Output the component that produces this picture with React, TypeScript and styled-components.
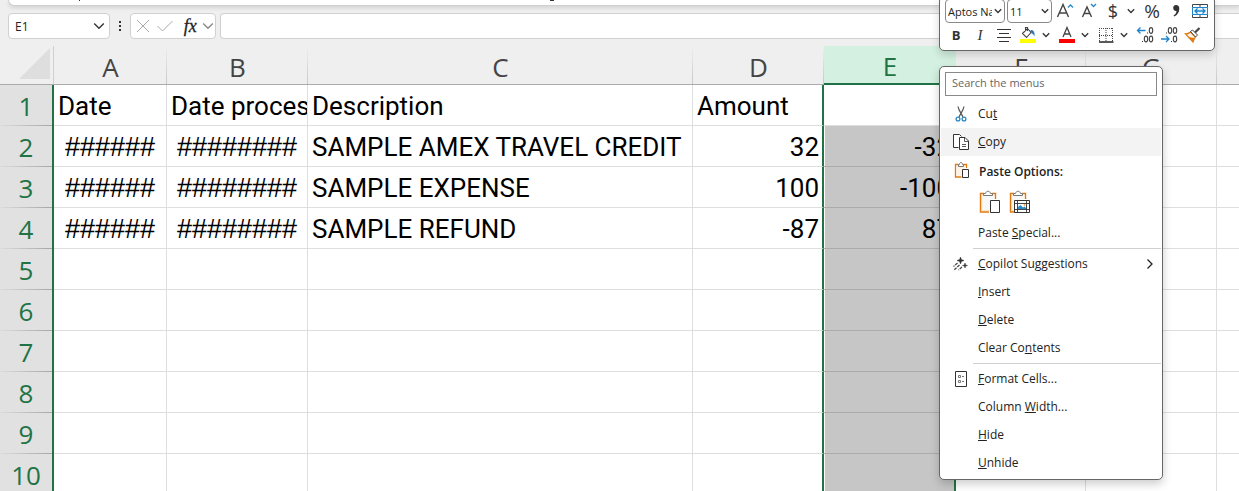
import React from "react";
import styled, { createGlobalStyle, css } from "styled-components";

const UI = `"Open Sans", "Noto Sans", sans-serif`;
const CELL = `Roboto, "Liberation Sans", sans-serif`;
const GREEN = "#217346";

const Global = createGlobalStyle`
  * { box-sizing: border-box; }
  html, body { margin: 0; background: #fff; }
  body { font-family: ${UI}; font-size: 12px; color: #222; overflow: hidden; }
  button, input, select { font: inherit; color: inherit; margin: 0; }
  button { background: none; border: 0; padding: 0; }
`;

const Page = styled.div`
  position: relative;
  display: flex;
  flex-direction: column;
  height: 100vh;
  overflow: hidden;
  background: #fff;
`;

const TopArea = styled.header`
  flex: none;
  background: #efefef;
  height: 46px;
`;

const RibbonEdge = styled.div`
  height: 6px;
  margin-left: 8px;
  background:
    linear-gradient(#333, #333) 70px 0 / 1px 1px no-repeat,
    linear-gradient(#333, #333) 541px 0 / 4px 1px no-repeat,
    #fff;
  border: 1px solid #d0d0d0;
  border-top: 0;
  border-right: 0;
  border-radius: 0 0 0 6px;
  box-shadow: 0 2px 4px rgba(0, 0, 0, 0.12);
`;

const FormulaBar = styled.div`
  display: flex;
  align-items: center;
  padding: 7px 0 0 8px;
`;

const Box = styled.div`
  display: flex;
  align-items: center;
  height: 26px;
  background: #fff;
  border: 1px solid #d0d0d0;
  border-radius: 4px;
`;

const NameBox = styled(Box)`
  width: 102px;
  padding: 0 4px 0 6px;
`;

const NameInput = styled.input`
  flex: 1;
  min-width: 0;
  border: 0;
  padding: 0;
  background: none;
  outline: none;
`;

const Dots = styled.div`
  width: 20px;
  display: flex;
  flex-direction: column;
  align-items: center;
  gap: 2px;
  &::before, &::after, & > span {
    content: "";
    width: 2px;
    height: 2px;
    background: #333;
  }
`;

const FxBox = styled(Box)`
  width: 86px;
  padding: 0 1px 0 4px;
  justify-content: space-between;
  margin-right: 4px;
`;

const Fx = styled.button`
  padding-left: 4px;
  font: italic 18px/20px "Liberation Serif", serif;
  color: #222;
  -webkit-text-stroke: 0.3px #222;
`;

const IconButton = styled.button`
  display: flex;
  align-items: center;
  justify-content: center;
`;

const FormulaInput = styled.input`
  flex: 1;
  height: 26px;
  border: 1px solid #d0d0d0;
  border-right: 0;
  border-radius: 4px 0 0 4px;
  background: #fff;
  outline: none;
`;

const Sheet = styled.table`
  flex: none;
  width: 100%;
  table-layout: fixed;
  border-collapse: separate;
  border-spacing: 0;
`;

const HeadCell = styled.th<{ $on?: boolean; $last?: boolean }>`
  height: 39px;
  padding: 3px 0 0;
  font: 400 26px/30px ${UI};
  color: ${(p) => (p.$on ? GREEN : "#444")};
  background: ${(p) =>
    p.$on
      ? "#d3f0e0"
      : p.$last
        ? "#efefef"
        : "linear-gradient(#efefef, #c8c8c8) right / 1px 100% no-repeat, #efefef"};
  border-bottom: ${(p) => (p.$on ? `2px solid ${GREEN}` : "1px solid #ababab")};
`;

const Corner = styled.td`
  padding: 0 3px 3px 0;
  background: #efefef;
  border-bottom: 1px solid #ababab;
  border-right: 1px solid #d0d0d0;
  svg { display: block; margin-left: auto; }
`;

const RowHead = styled.th`
  height: 41px;
  padding: 0;
  font: 400 26px/30px ${UI};
  color: ${GREEN};
  background: linear-gradient(90deg, #dcdcdc, #a6a6a6) bottom / 100% 1px no-repeat, #e1e1e1;
  border-right: 2px solid ${GREEN};
`;

type Kind = "text" | "num" | "hash";

const Cell = styled.td<{
  $kind?: Kind;
  $sel?: boolean;
  $shade?: boolean;
  $edge?: boolean;
  $last?: boolean;
}>`
  height: 41px;
  padding: 1px 4px 0;
  overflow: hidden;
  white-space: nowrap;
  font: 26px/30px ${CELL};
  color: #000;
  border-right: 1px solid #dedede;
  border-bottom: 1px solid #dedede;
  ${(p) => p.$kind === "num" && css`text-align: right; padding-right: 3px;`}
  ${(p) =>
    p.$kind === "hash" &&
    css`
      text-align: center;
      padding: 1px 0 0;
      font: 27px/30px "Liberation Sans", sans-serif;
    `}
  ${(p) => p.$edge && css`border-right: 2px solid ${GREEN};`}
  ${(p) => p.$last && css`border-right: 0;`}
  ${(p) => p.$sel && css`box-shadow: inset 1px 0 #fff;`}
  ${(p) => p.$shade && css`background: #c6c6c6; border-bottom-color: #ababab;`}
`;

const FloatBar = styled.div`
  position: absolute;
  left: 939px;
  top: -4px;
  width: 276px;
  height: 55px;
  padding: 2px 2px 0 4px;
  background: #fff;
  border: 1px solid #666;
  border-radius: 5px;
  box-shadow: 0 4px 8px rgba(0, 0, 0, 0.16);
`;

const BarRow = styled.div`
  display: flex;
  align-items: center;
  height: 24px;
`;

const SelectWrap = styled.label<{ $w: number }>`
  position: relative;
  display: flex;
  align-items: center;
  width: ${(p) => p.$w}px;
  height: 24px;
  margin: 0 1px;
  border: 1px solid #8a8a8a;
  border-radius: 4px;
  svg { position: absolute; right: 2px; pointer-events: none; }
`;

const Select = styled.select`
  appearance: none;
  width: calc(100% - 12px);
  height: 20px;
  border: 0;
  padding: 0 0 0 2px;
  background: none;
  outline: none;
  overflow: hidden;
  text-overflow: clip;
  font-size: 11px;
`;

const Tool = styled.button<{ $narrow?: boolean }>`
  display: flex;
  align-items: center;
  justify-content: center;
  width: ${(p) => (p.$narrow ? 12 : 24)}px;
  height: 24px;
  margin-right: ${(p) => (p.$narrow ? 3 : 0)}px;
`;

const Glyph = styled.span<{ $size?: number; $italic?: boolean; $bold?: boolean }>`
  font-size: ${(p) => p.$size ?? 12}px;
  line-height: 20px;
  color: #333;
  font-weight: ${(p) => (p.$bold ? 700 : 400)};
  ${(p) => p.$italic && css`font-family: "Liberation Serif", serif; font-style: italic;`}
`;

const Menu = styled.div`
  position: absolute;
  left: 939px;
  top: 66px;
  width: 224px;
  padding: 5px 1px 2px;
  background: #fff;
  border: 1px solid #666;
  border-radius: 5px;
  box-shadow: 0 4px 10px rgba(0, 0, 0, 0.2);
`;

const Search = styled.input`
  display: block;
  width: calc(100% - 8px);
  height: 24px;
  margin: 0 4px 4px;
  padding: 0 6px 4px;
  border: 1px solid #8a8a8a;
  outline: none;
  font-size: 11px;
  &::placeholder { color: #666; opacity: 1; }
`;

const MenuItem = styled.button<{ $hot?: boolean }>`
  display: grid;
  grid-template-columns: 37px 1fr 18px;
  align-items: center;
  width: 100%;
  height: 28px;
  padding-bottom: 1px;
  text-align: left;
  background: ${(p) => (p.$hot ? "#f3f3f3" : "none")};
  & > svg { margin-left: 11px; }
  & > svg:last-child { margin-left: 1px; }
`;

const MenuHeading = styled.div`
  display: grid;
  grid-template-columns: 38px 1fr;
  align-items: center;
  height: 31px;
  font-weight: 600;
  & > svg { margin: -3px 0 0 13px; }
`;

const PasteRow = styled.div`
  display: flex;
  gap: 8px;
  height: 32px;
  padding: 0 0 2px 38px;
`;

const Rule = styled.hr`
  height: 1px;
  margin: 1px 0 1px 32px;
  border: 0;
  background: #d0d0d0;
`;

const Chevron = ({ size = 8, color = "#333" }: { size?: number; color?: string }) => (
  <svg width={size} height={size} viewBox="0 0 8 8" fill="none" stroke={color} strokeWidth={size > 9 ? 0.9 : 1.3}>
    <path d="M.8 2.3 4 5.5 7.200 2.300" />
  </svg>
);

const CutIcon = () => (
  <svg width="18" height="18" viewBox="0 0 18 18" fill="none">
    <path d="M6 1.500C6.500 5 9 8 11 12M12 1.500C11.500 5 9 8 7 12" stroke="#555" strokeWidth="1.200" />
    <circle cx="6" cy="14" r="1.900" stroke="#2b88c8" strokeWidth="1.300" />
    <circle cx="12" cy="14" r="1.900" stroke="#2b88c8" strokeWidth="1.300" />
  </svg>
);

const CopyIcon = () => (
  <svg width="18" height="18" viewBox="0 0 18 18" fill="none" stroke="#333">
    <path d="M6.500 14.500H1.500V1.500H7.500L9.500 3.500" fill="#fff" />
    <path d="M7.500 4.500H13L16.500 8V16.500H7.500Z" fill="#fff" />
    <path d="M12.500 4.500V8.500H16.500M10 11.500H14M10 13.500H14" strokeWidth=".8" />
  </svg>
);

const PasteIcon = () => (
  <svg width="16" height="18" viewBox="0 0 16 18" fill="none">
    <path d="M3 4H11V8H8V15H3Z" fill="#fdf3e4" />
    <path d="M4.500 3.500H1.500V16H7.500M12.500 7V3.500H9.500" stroke="#e07a10" strokeWidth="1.300" />
    <path d="M4.500 5.500V3.500H5.500C5.500 .7 8.500 .7 8.500 3.500H9.500V5.500Z" stroke="#777" fill="#fff" />
    <path d="M8.500 8.500H14.500V16.500H8.500Z" stroke="#333" fill="#fff" />
  </svg>
);

const PasteBig = ({ picture }: { picture?: boolean }) => (
  <svg width="22" height="24" viewBox="0 0 22 24" fill="none">
    <path d="M3 5H15V9H11V21H3Z" fill="#f8f8f8" />
    <path d="M2.800 5V20.500H10" stroke="#fbe3c0" />
    <path d="M5 3.500H1.500V22H10M16.500 9V3.500H13" stroke="#e07a10" strokeWidth="1.400" />
    <path d="M4.500 5.500V3.500H6.500C7 .5 11 .5 11.500 3.500H13.500V5.500Z" stroke="#777" fill="#fff" />
    {picture ? (
      <g>
        <path d="M5.500 10.500H20.500V22.500H5.500Z" stroke="#333" fill="#fff" />
        <path d="M8.500 10.500V22.500M17.500 10.500V22.500M5.500 13.500H20.500M5.500 19.500H20.500" stroke="#333" strokeWidth=".9" />
        <path d="M9 19V17L11.500 15 14 17.500 15.500 16.500 17 18V19Z" fill="#2b88c8" />
        <circle cx="15.500" cy="15" r=".8" fill="#e07a10" />
      </g>
    ) : (
      <path d="M11.500 10.500H20.500V22.500H11.500Z" stroke="#333" fill="#fff" />
    )}
  </svg>
);

const CopilotIcon = () => (
  <svg width="18" height="16" viewBox="0 0 18 16">
    <path d="M8.500 1 9.400 3.600 12 4.500 9.400 5.400 8.500 8 7.600 5.400 5 4.500 7.600 3.600ZM13 7 13.600 8.900 15.500 9.500 13.600 10.100 13 12 12.400 10.100 10.500 9.500 12.400 8.900Z" fill="#333" stroke="#333" strokeWidth=".5" />
    <path d="M5.500 7 1.500 10.500M7.500 9 2 14M10 11 6.500 14" stroke="#444" strokeWidth="1.200" strokeDasharray="3 1" />
  </svg>
);

const FormatIcon = () => (
  <svg width="17" height="18" viewBox="0 0 17 18" fill="none" stroke="#333">
    <path d="M3.500 1.500H14.500V16.500H3.500Z" />
    <path d="M6.500 5.500H8.500V7.500H6.500ZM6.500 10.500H8.500V12.500H6.500ZM10 6.500H12M10 11.500H12" stroke="#777" />
  </svg>
);

const GrowIcon = ({ down }: { down?: boolean }) => (
  <svg width="18" height="18" viewBox="0 0 18 18" fill="none">
    {down ? (
      <>
        <path d="M2.500 15 7 5 11.500 15M4 11.500H10" stroke="#444" strokeWidth="1.400" />
        <path d="M11 2 13.500 4.500 16 2" stroke="#2b88c8" strokeWidth="1.400" />
      </>
    ) : (
      <>
        <path d="M1.500 15 7 2.500 12.500 15M3.300 11H10.700" stroke="#444" strokeWidth="1.400" />
        <path d="M12 5.500 14.500 3 17 5.500" stroke="#2b88c8" strokeWidth="1.400" />
      </>
    )}
  </svg>
);

const MergeIcon = () => (
  <svg width="16" height="16" viewBox="0 0 16 16" fill="none">
    <path d="M.5 4.500V1.500H15.500V4.500M.5 11.500V14.500H15.500V11.500M8 1V4M8 12V15" stroke="#444" />
    <path d="M.5 4.500H15.500V11.500H.5Z" stroke="#1e84cc" fill="#eaf5fc" />
    <path d="M3 8H13M5.500 5.500 3 8 5.500 10.500M10.500 5.500 13 8 10.500 10.500" stroke="#1e84cc" strokeWidth="1.300" />
  </svg>
);

const AlignIcon = () => (
  <svg width="16" height="16" viewBox="0 0 16 16" stroke="#333">
    <path d="M1 2.500H15M3 6.500H13M1 10.500H15M3 14.500H13" />
  </svg>
);

const FillIcon = () => (
  <svg width="18" height="18" viewBox="0 0 18 18" fill="none">
    <path d="M3.500 7.500 8.500 2.500 12 6.500 7.500 11.500ZM6.500 5V1.500H8.500V5" stroke="#444" strokeWidth="1.100" />
    <path d="M11.500 4C14.500 3.500 16 6 15.500 10.500 14.500 8.500 14 7.500 12.500 7.500" fill="#2b78b8" />
    <path d="M1 13H17V17H1Z" fill="#ffff00" />
  </svg>
);

const FontColorIcon = () => (
  <svg width="18" height="18" viewBox="0 0 18 18" fill="none">
    <path d="M5 11 9 1.500 13 11M6.300 8H11.700" stroke="#444" strokeWidth="1.300" />
    <path d="M1 13H17V17H1Z" fill="#ff0000" />
  </svg>
);

const BordersIcon = () => (
  <svg width="16" height="16" viewBox="0 0 16 16" fill="none" stroke="#444">
    <path d="M1 1.500H15M1 8.500H15M1.500 1V14M8 1V14M14.500 1V14" strokeDasharray="1 1" />
    <path d="M1 15H15.500" stroke="#222" strokeWidth="1.500" />
  </svg>
);

const DecimalIcon = ({ less }: { less?: boolean }) => {
  const zero = (x: number, y: number) => (
    <ellipse key={`${x}-${y}`} cx={x} cy={y} rx="1.700" ry="2.900" />
  );
  const top = less ? [10, 15] : [15];
  const bottom = less ? [15] : [10, 15];
  return (
    <svg width="18" height="18" viewBox="0 0 18 18" fill="none">
      <g stroke="#444" strokeWidth="1.100">
        {top.map((x) => zero(x, 4.5))}
        {bottom.map((x) => zero(x, 13))}
      </g>
      <path d={less ? "M6 6.500H7V7.500H6ZM11 15H12V16H11Z" : "M11 6.500H12V7.500H11ZM6 15H7V16H6Z"} fill="#333" />
      <path
        d={less ? "M1 13H9M6 10 9 13 6 16" : "M9.500 4.500H1.500M4.500 1.500 1.500 4.500 4.500 7.500"}
        stroke="#1e84cc"
        strokeWidth="1.300"
      />
    </svg>
  );
};

const BrushIcon = () => (
  <svg width="18" height="18" viewBox="0 0 18 18" fill="none">
    <path d="M1.500 8C4 8 5.500 7 6.500 6L11.500 11C10.500 12.500 9.500 14 9 16Z" stroke="#e07a10" strokeWidth="1.300" fill="#fdf3e4" />
    <path d="M4 11 8.500 15.500 10.500 12Z" fill="#e07a10" />
    <path d="M6.500 5.500 8.500 4 13.500 9 11.500 11Z" fill="#fff" stroke="#444" />
    <path d="M11 6.500 15.500 2" stroke="#444" strokeWidth="2.200" />
  </svg>
);

const columns = ["A", "B", "C", "D", "E", "F", "G", ""];
const widths = [54, 113, 141, 385, 131, 132, 130, 131];

const rows: string[][] = [
  ["Date", "Date processed", "Description", "Amount", ""],
  ["######", "########", "SAMPLE AMEX TRAVEL CREDIT", "32", "-32"],
  ["######", "########", "SAMPLE EXPENSE", "100", "-100"],
  ["######", "########", "SAMPLE REFUND", "-87", "87"],
  [], [], [], [], [], [],
];

const kindOf = (v: string): Kind =>
  v.startsWith("#") ? "hash" : /^-?\d+$/.test(v) ? "num" : "text";

// Underscores mark the access key: "Cu_t_" underlines the t.
const Label = ({ text }: { text: string }) => {
  const [a, k, b] = text.split("_");
  return (
    <span>
      {a}
      {k && <u>{k}</u>}
      {b}
    </span>
  );
};

export default function App() {
  return (
    <Page>
      <Global />
      <TopArea>
        <RibbonEdge />
        <FormulaBar>
          <NameBox>
            <NameInput aria-label="Name box" defaultValue="E1" />
            <IconButton aria-label="Open name list"><Chevron size={12} /></IconButton>
          </NameBox>
          <Dots><span /></Dots>
          <FxBox>
            <IconButton aria-label="Cancel">
              <svg width="16" height="16" viewBox="0 0 16 16" stroke="#aaa"><path d="M2 2 14 14M14 2 2 14" /></svg>
            </IconButton>
            <IconButton aria-label="Enter">
              <svg width="18" height="16" viewBox="0 0 18 16" stroke="#aaa" fill="none"><path d="M1.500 8 6.500 13 16.500 3" /></svg>
            </IconButton>
            <Fx aria-label="Insert function">fx</Fx>
            <IconButton aria-label="Functions"><Chevron size={12} color="#888" /></IconButton>
          </FxBox>
          <FormulaInput aria-label="Formula" />
        </FormulaBar>
      </TopArea>

      <Sheet>
        <colgroup>
          {widths.map((w, i) => <col key={i} width={w} />)}
          <col />
        </colgroup>
        <thead>
          <tr>
            <Corner>
              <svg width="31" height="31" viewBox="0 0 31 31"><path d="M31 0V31H0Z" fill="#dedede" /></svg>
            </Corner>
            {columns.map((c, i) => (
              <HeadCell key={i} scope="col" $on={c === "E"} $last={!c}>{c}</HeadCell>
            ))}
          </tr>
        </thead>
        <tbody>
          {rows.map((r, y) => (
            <tr key={y}>
              <RowHead scope="row">{y + 1}</RowHead>
              {columns.map((c, x) => (
                <Cell
                  key={x}
                  $kind={kindOf(r[x] ?? "")}
                  $edge={c === "D" || c === "E"}
                  $sel={c === "E"}
                  $shade={c === "E" && y > 0}
                  $last={!c}
                >
                  {r[x]}
                </Cell>
              ))}
            </tr>
          ))}
        </tbody>
      </Sheet>

      <FloatBar role="toolbar" aria-label="Mini toolbar">
        <BarRow>
          <SelectWrap $w={60}>
            <Select aria-label="Font"><option>Aptos Narrow</option></Select>
            <Chevron />
          </SelectWrap>
          <SelectWrap $w={45}>
            <Select aria-label="Font size"><option>11</option></Select>
            <Chevron />
          </SelectWrap>
          <Tool aria-label="Increase font size"><GrowIcon /></Tool>
          <Tool aria-label="Decrease font size"><GrowIcon down /></Tool>
          <Tool><Glyph $size={18}>$</Glyph></Tool>
          <Tool $narrow aria-label="Currency options"><Chevron /></Tool>
          <Tool><Glyph $size={19}>%</Glyph></Tool>
          <Tool aria-label="Comma style">
            <svg width="10" height="14" viewBox="0 0 10 14"><path d="M5 1A3 3 0 1 0 5.500 7C5.300 9 4.200 10.500 2.500 11.500L3.200 12.500C6.500 11 8.300 8.300 8.300 4.500A3.300 3.500 0 0 0 5 1Z" fill="#333" /></svg>
          </Tool>
          <Tool aria-label="Merge and center"><MergeIcon /></Tool>
        </BarRow>
        <BarRow>
          <Tool><Glyph $bold $size={13}>B</Glyph></Tool>
          <Tool><Glyph $italic $size={15}>I</Glyph></Tool>
          <Tool aria-label="Center"><AlignIcon /></Tool>
          <Tool aria-label="Fill color"><FillIcon /></Tool>
          <Tool $narrow aria-label="Fill options"><Chevron /></Tool>
          <Tool aria-label="Font color"><FontColorIcon /></Tool>
          <Tool $narrow aria-label="Font color options"><Chevron /></Tool>
          <Tool aria-label="Borders"><BordersIcon /></Tool>
          <Tool $narrow aria-label="Border options"><Chevron /></Tool>
          <Tool aria-label="Increase decimal"><DecimalIcon /></Tool>
          <Tool aria-label="Decrease decimal"><DecimalIcon less /></Tool>
          <Tool aria-label="Format painter"><BrushIcon /></Tool>
        </BarRow>
      </FloatBar>

      <Menu role="menu">
        <Search aria-label="Search the menus" placeholder="Search the menus" />
        <MenuItem role="menuitem"><CutIcon /><Label text="Cu_t_" /></MenuItem>
        <MenuItem role="menuitem" $hot><CopyIcon /><Label text="_C_opy" /></MenuItem>
        <MenuHeading><PasteIcon />Paste Options:</MenuHeading>
        <PasteRow>
          <IconButton aria-label="Paste"><PasteBig /></IconButton>
          <IconButton aria-label="Paste picture"><PasteBig picture /></IconButton>
        </PasteRow>
        <MenuItem role="menuitem"><i /><Label text="Paste _S_pecial..." /></MenuItem>
        <Rule />
        <MenuItem role="menuitem">
          <CopilotIcon /><Label text="_C_opilot Suggestions" />
          <svg width="12" height="12" viewBox="0 0 12 12" fill="none" stroke="#222" strokeWidth="1.300"><path d="M3.500 1.500 8 6 3.500 10.500" /></svg>
        </MenuItem>
        <MenuItem role="menuitem"><i /><Label text="_I_nsert" /></MenuItem>
        <MenuItem role="menuitem"><i /><Label text="_D_elete" /></MenuItem>
        <MenuItem role="menuitem"><i /><Label text="Clear Co_n_tents" /></MenuItem>
        <Rule />
        <MenuItem role="menuitem"><FormatIcon /><Label text="_F_ormat Cells..." /></MenuItem>
        <MenuItem role="menuitem"><i /><Label text="Column _W_idth..." /></MenuItem>
        <MenuItem role="menuitem"><i /><Label text="_H_ide" /></MenuItem>
        <MenuItem role="menuitem"><i /><Label text="_U_nhide" /></MenuItem>
      </Menu>
    </Page>
  );
}
